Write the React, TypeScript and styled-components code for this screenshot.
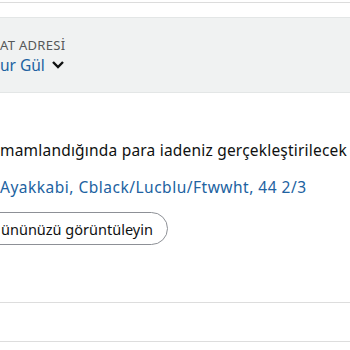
import React from 'react'
import styled, { createGlobalStyle } from 'styled-components'

const Global = createGlobalStyle`
  body {
    margin: 0;
    background: #fff;
    font-family: "Noto Sans", "Liberation Sans", sans-serif;
    color: #0f1111;
    overflow: hidden;
  }
`

const Page = styled.div`
  width: 350px;
  height: 350px;
  padding-top: 2px;
  overflow: hidden;
`

const TopRule = styled.div`
  height: 1px;
  background: #dcdcdc;
`

const AddressBox = styled.div`
  margin-top: 14px;
  height: 76px;
  background: #f0f2f2;
  border-top: 1px solid #e3e6e6;
  border-bottom: 1px solid #e3e6e6;
  padding-top: 19px;
  box-sizing: border-box;
`

const Label = styled.div`
  font-size: 13px;
  line-height: 16px;
  color: #565959;
  letter-spacing: 0.3px;
`

const Name = styled.div`
  margin-top: 1px;
  display: flex;
  align-items: center;
  gap: 6px;
  font-size: 15.5px;
  line-height: 22px;
  color: #2162a1;
`

const Body = styled.div`
  padding-top: 47px;
`

const Message = styled.div`
  font-size: 15.5px;
  line-height: 20px;
  letter-spacing: 0.2px;
  white-space: nowrap;
`

const ItemLink = styled.a`
  display: block;
  margin-top: 17px;
  font-size: 15.5px;
  line-height: 20px;
  letter-spacing: 0.5px;
  color: #2162a1;
  text-decoration: none;
  white-space: nowrap;
`

const PillButton = styled.button`
  margin-top: 15px;
  margin-left: -30px;
  height: 33px;
  padding: 0 14px 0 30px;
  border: 1px solid #8d9096;
  border-radius: 17px;
  background: #fff;
  font-family: inherit;
  font-size: 14.5px;
  color: #0f1111;
  display: flex;
  align-items: center;
`

const Divider = styled.div<{ $gap: number }>`
  margin-top: ${p => p.$gap}px;
  height: 1px;
  background: #dddddd;
`

export default function App() {
  return (
    <Page>
      <Global />
      <TopRule />
      <AddressBox>
        <Label>AT ADRESİ</Label>
        <Name>
          ur Gül
          <svg width="14" height="10" viewBox="0 0 14 10">
            <path d="M2 2 L7 7 L12 2" fill="none" stroke="#0f1111" strokeWidth="2.4" />
          </svg>
        </Name>
      </AddressBox>
      <Body>
        <Message>mamlandığında para iadeniz gerçekleştirilecek</Message>
        <ItemLink href="#">Ayakkabi, Cblack/Lucblu/Ftwwht, 44 2/3</ItemLink>
        <PillButton>ününüzü görüntüleyin</PillButton>
      </Body>
      <Divider $gap={57} />
      <Divider $gap={38} />
    </Page>
  )
}
